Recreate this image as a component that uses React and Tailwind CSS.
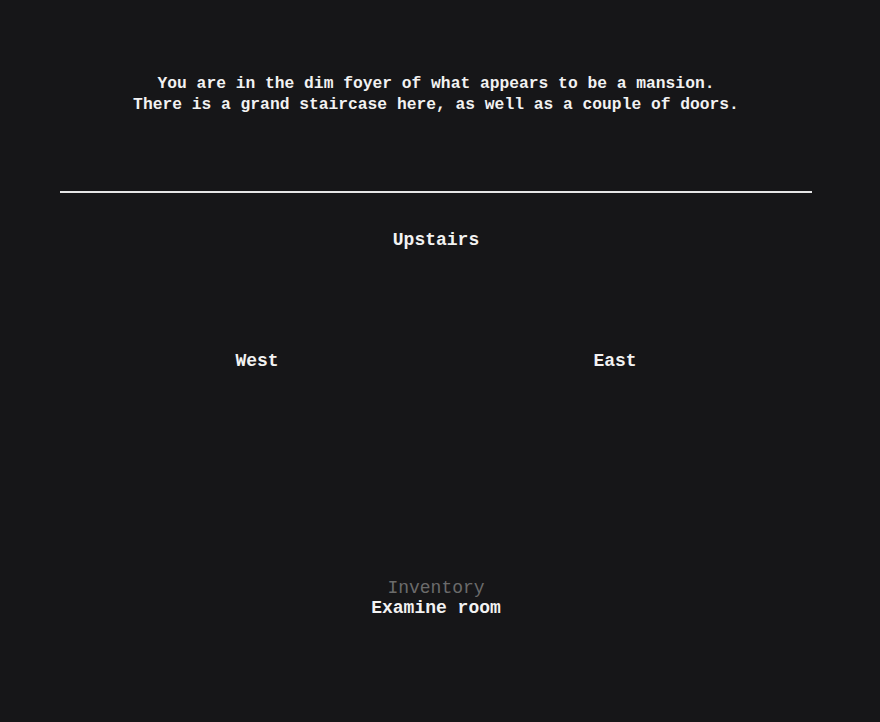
export default function App() {
  const font = { fontFamily: '"Liberation Mono", "DejaVu Sans Mono", monospace' };
  return (
    <div className="min-h-[722px] w-[880px] bg-[#161618] text-[#f2f2f2]" style={font}>
      <div className="ml-[60px] w-[752px] flex flex-col">
        <div className="pt-[73px] h-[191px] text-center text-[16.3px] leading-[21px] font-bold">
          <p>You are in the dim foyer of what appears to be a mansion.</p>
          <p>There is a grand staircase here, as well as a couple of doors.</p>
        </div>
        <div className="h-[2px] bg-[#e6e6e6]" />
        <div className="pt-[36px] text-center text-[18px] leading-[22px] font-bold">Upstairs</div>
        <div className="mt-[99px] flex justify-center text-[18px] leading-[22px] font-bold">
          <div className="w-[358px] text-center">West</div>
          <div className="w-[358px] text-center">East</div>
        </div>
        <div className="mt-[206px] flex flex-col items-center text-[18px] leading-[20px] font-bold">
          <div className="text-[#6b6b6b] font-normal">Inventory</div>
          <div>Examine room</div>
        </div>
      </div>
    </div>
  );
}
